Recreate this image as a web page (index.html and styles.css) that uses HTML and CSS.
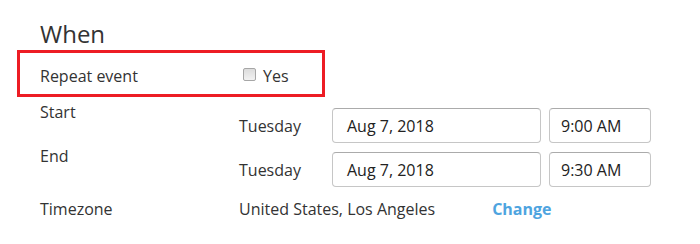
FILE: index.html
```html
<!DOCTYPE html>
<html lang="en">
<head>
<meta charset="utf-8">
<title>When</title>
<link rel="stylesheet" href="styles.css">
</head>
<body>
<div class="page">
  <h2 class="title">When</h2>
  <div class="repeat">
    <span class="label">Repeat event</span>
    <label class="check"><span class="box"></span><span>Yes</span></label>
  </div>
  <div class="row">
    <span class="label">Start</span>
    <div class="controls">
      <span class="day">Tuesday</span>
      <span class="field date">Aug 7, 2018</span>
      <span class="field time">9:00 AM</span>
    </div>
  </div>
  <div class="row">
    <span class="label">End</span>
    <div class="controls">
      <span class="day">Tuesday</span>
      <span class="field date">Aug 7, 2018</span>
      <span class="field time">9:30 AM</span>
    </div>
  </div>
  <div class="row tz">
    <span class="label">Timezone</span>
    <div class="tz-value">
      <span>United States, Los Angeles</span>
      <a class="change">Change</a>
    </div>
  </div>
</div>
</body>
</html>
```

FILE: styles.css
```css
html, body {
  margin: 0;
  background: #fff;
}
body {
  font-family: "Open Sans", "DejaVu Sans", sans-serif;
  font-size: 16px;
  line-height: 22px;
  color: #333;
}
.page {
  padding: 17px 0 0 17px;
}
.title {
  margin: 0 0 0 23px;
  font-size: 24px;
  line-height: 33px;
  font-weight: 400;
  color: #333;
}
.repeat {
  width: 282px;
  height: 41px;
  border: 3px solid #ed1c24;
  box-sizing: content-box;
  padding: 0 0 0 20px;
  display: flex;
  align-items: flex-start;
}
.repeat .label {
  width: 199px;
  margin-top: 12px;
}
.check {
  display: flex;
  align-items: center;
  margin-top: 12px;
  height: 22px;
}
.box {
  width: 11px;
  height: 11px;
  margin: 0 7px 3px 4px;
  border: 1px solid #a6a6a6;
  border-radius: 2px;
  background: linear-gradient(#dcdcdc, #f2f2f2);
}
.row {
  display: flex;
  align-items: flex-start;
  height: 44px;
  padding-left: 23px;
}
.row .label {
  width: 199px;
  flex: none;
  margin-top: 4px;
}
.controls {
  display: flex;
  align-items: center;
  margin-top: 11px;
}
.day {
  width: 93px;
}
.field {
  box-sizing: border-box;
  height: 35px;
  display: flex;
  align-items: center;
  border: 1px solid #c6c6c6;
  border-top-color: #ababab;
  border-radius: 4px;
  color: #222;
}
.date {
  width: 209px;
  padding-left: 14px;
}
.time {
  width: 102px;
  margin-left: 8px;
  padding-left: 11px;
}
.tz .label,
.tz-value {
  margin-top: 13px;
}
.tz-value {
  display: flex;
}
.change {
  margin-left: 57px;
  font-weight: 700;
  color: #4ea4df;
  cursor: pointer;
}
```
